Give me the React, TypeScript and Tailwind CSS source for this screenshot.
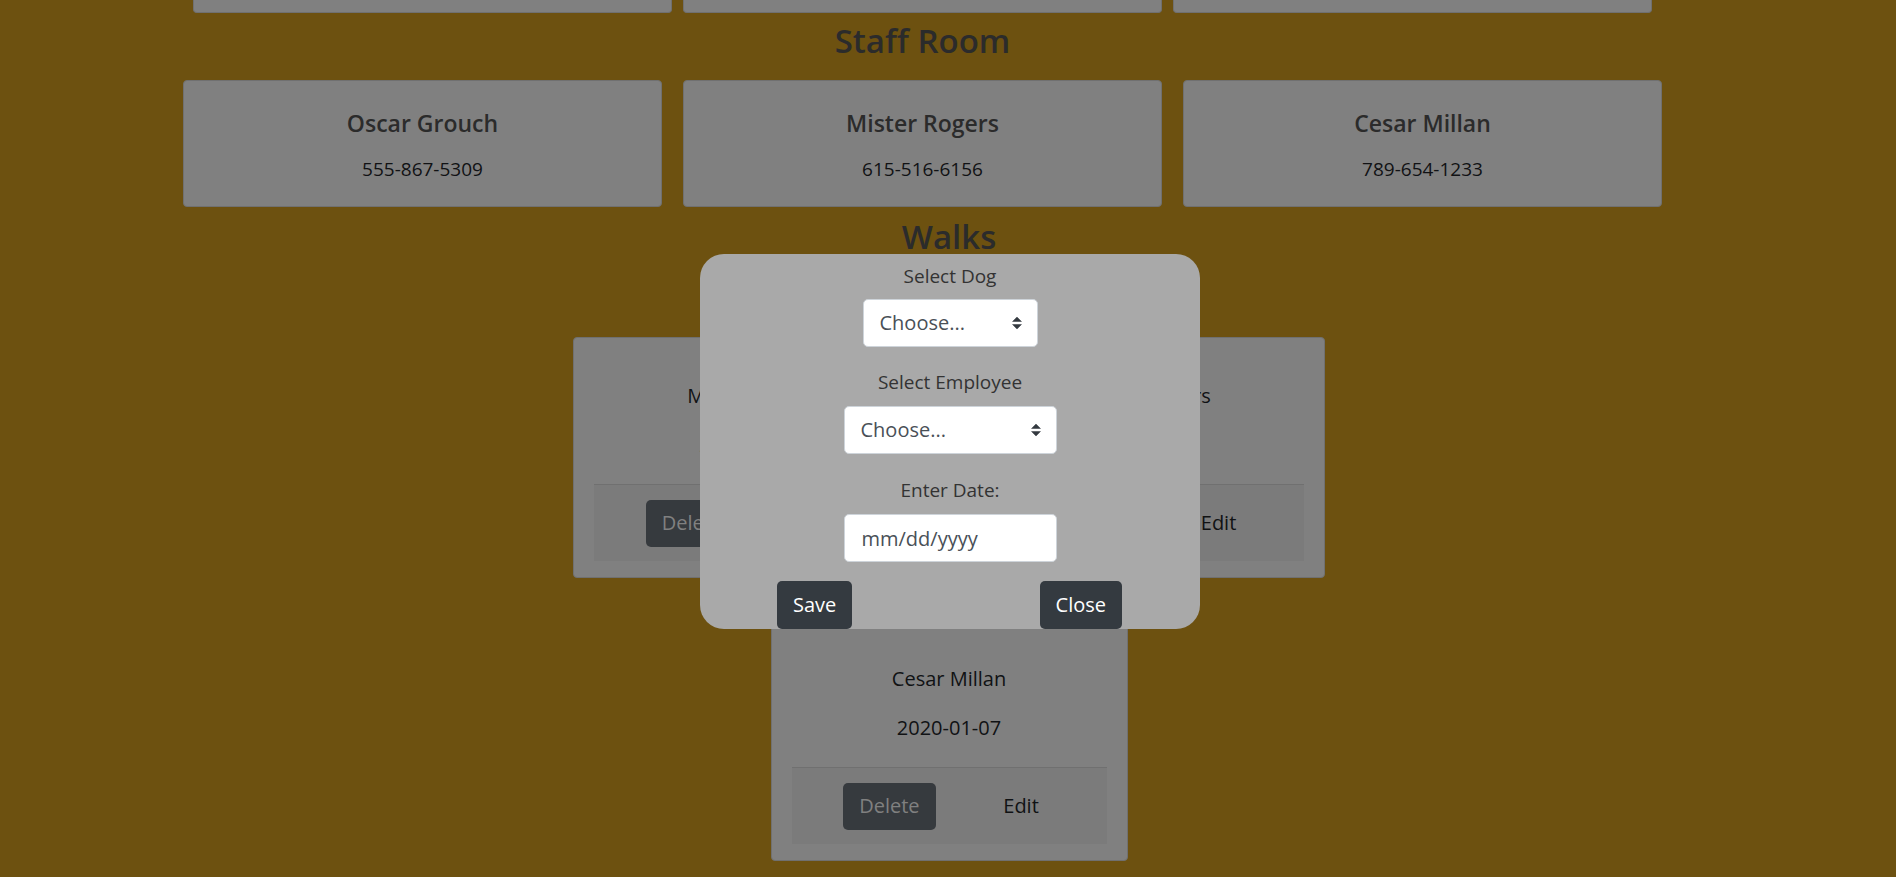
import React from 'react';

const staff = [
  { name: 'Oscar Grouch', phone: '555-867-5309' },
  { name: 'Mister Rogers', phone: '615-516-6156' },
  { name: 'Cesar Millan', phone: '789-654-1233' },
];

const walks = [
  { employee: 'Mister Rogers', date: '2020-01-05' },
  { employee: 'Mister Rogers', date: '2020-01-06' },
  { employee: 'Cesar Millan', date: '2020-01-07' },
];

function SelectArrow() {
  return (
    <svg className="pointer-events-none absolute right-[16px] top-1/2 -translate-y-1/2" width="10" height="13" viewBox="0 0 4 5">
      <path fill="#343a40" d="M2 0L0 2h4zm0 5L0 3h4z" />
    </svg>
  );
}

function WalkCard({ employee, date }: { employee: string; date: string }) {
  return (
    <div className="w-[357px] h-[241px] flex flex-col items-center px-[20px] pt-[43px] bg-[#808080] border border-[#707070] rounded-[4px] text-[#101214] text-[20px]">
      <p className="leading-[30px]">{employee}</p>
      <p className="leading-[30px] mt-[19px]">{date}</p>
      <div className="mt-[24px] w-full h-[77px] flex items-center justify-evenly bg-[#7b7b7b] border-t border-[#707070]">
        <button className="h-[47px] px-[16px] rounded-[5px] bg-[#363a3e] text-[#808080] text-[20px]">Delete</button>
        <button className="h-[47px] px-[16px] rounded-[5px] text-[#101214] text-[20px]">Edit</button>
      </div>
    </div>
  );
}

export default function App() {
  return (
    <div className="relative min-h-screen overflow-hidden bg-[#6d5110] font-['Open_Sans',sans-serif]">
      <div className="pr-[51px]">
        <div className="flex justify-center gap-[11px]">
          {[0, 1, 2].map((i) => (
            <div key={i} className="w-[479px] h-[13px] bg-[#808080] border border-t-0 border-[#707070] rounded-b-[4px]" />
          ))}
        </div>
        <h2 className="mt-[8px] text-center text-[33px] leading-[40px] font-semibold text-[#2b2b2b]">Staff Room</h2>
        <div className="mt-[19px] flex justify-center gap-[21px]">
          {staff.map((s) => (
            <div key={s.name} className="w-[479px] h-[127px] flex flex-col items-center pt-[27px] bg-[#808080] border border-[#707070] rounded-[4px]">
              <h4 className="text-[23px] leading-[30px] font-semibold text-[#2b2b2b]">{s.name}</h4>
              <p className="mt-[16px] text-[19px] leading-[30px] text-[#111214]">{s.phone}</p>
            </div>
          ))}
        </div>
      </div>

      <div className="pl-[2px]">
        <h2 className="mt-[10px] text-center text-[33px] leading-[40px] font-semibold text-[#2b2b2b]">Walks</h2>
        <div className="mt-[80px] mx-auto w-[752px] flex flex-wrap justify-center gap-x-[38px] gap-y-[42px]">
          {walks.map((w, i) => (
            <WalkCard key={i} employee={w.employee} date={w.date} />
          ))}
        </div>
      </div>

      <div className="absolute left-[700px] top-[254px] w-[500px] h-[375px] flex flex-col items-center pt-[10px] bg-[#a9a9a9] rounded-[24px] text-[#333333]">
        <label className="text-[19px] leading-[24px]">Select Dog</label>
        <div className="relative mt-[11px]">
          <select className="appearance-none w-[175px] h-[48px] pl-[16px] pr-[36px] bg-white border border-[#ced4da] rounded-[5px] text-[20px] text-[#495057] outline-none">
            <option>Choose...</option>
          </select>
          <SelectArrow />
        </div>
        <label className="mt-[23px] text-[19px] leading-[24px]">Select Employee</label>
        <div className="relative mt-[12px]">
          <select className="appearance-none w-[213px] h-[48px] pl-[16px] pr-[36px] bg-white border border-[#ced4da] rounded-[5px] text-[20px] text-[#495057] outline-none">
            <option>Choose...</option>
          </select>
          <SelectArrow />
        </div>
        <label className="mt-[24px] text-[19px] leading-[24px]">Enter Date:</label>
        <input
          type="text"
          placeholder="mm/dd/yyyy"
          className="mt-[12px] w-[213px] h-[48px] px-[17px] bg-white border border-[#ced4da] rounded-[5px] text-[20px] text-[#495057] placeholder:text-[#495057] outline-none"
        />
        <div className="mt-[19px] w-full flex justify-between pl-[77px] pr-[78px]">
          <button className="h-[48px] px-[16px] rounded-[5px] bg-[#343a40] text-white text-[20px]">Save</button>
          <button className="h-[48px] px-[16px] rounded-[5px] bg-[#343a40] text-white text-[20px]">Close</button>
        </div>
      </div>
    </div>
  );
}
